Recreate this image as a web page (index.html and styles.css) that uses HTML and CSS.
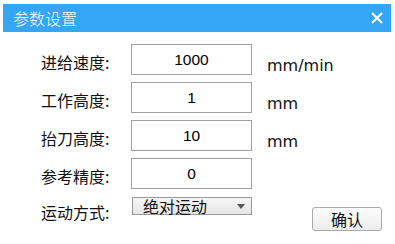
FILE: index.html
```html
<!DOCTYPE html>
<html lang="zh-CN">
  <head>
    <meta charset="UTF-8" />
    <meta name="viewport" content="width=device-width, initial-scale=1.0" />
    <title>参数设置</title>
    <link rel="stylesheet" href="styles.css">
  </head>
  <body>
    <div class="dialog">
      <div class="dialog-header">
        <span class="dialog-title">参数设置</span>
        <span class="close-btn">
          <svg width="12" height="12" viewBox="0 0 12 12">
            <path d="M1 1 L11 11 M11 1 L1 11" stroke="#fff" stroke-width="2.2" />
          </svg>
        </span>
      </div>

      <div class="param-form">
        <label class="param-label">进给速度:</label>
        <div class="param-input">1000</div>
        <span class="param-unit">mm/min</span>

        <label class="param-label">工作高度:</label>
        <div class="param-input">1</div>
        <span class="param-unit">mm</span>

        <label class="param-label">抬刀高度:</label>
        <div class="param-input">10</div>
        <span class="param-unit">mm</span>

        <label class="param-label">参考精度:</label>
        <div class="param-input">0</div>
        <span class="param-unit"></span>

        <label class="param-label mode-label">运动方式:</label>
        <div class="mode-select">
          <span>绝对运动</span>
          <span class="select-arrow"></span>
        </div>
        <div class="confirm-cell">
          <button class="confirm-btn">确认</button>
        </div>
      </div>
    </div>
  </body>
</html>
```

FILE: styles.css
```css
body {
  margin: 0;
  padding: 0;
  background: #fff;
  font-family: "Noto Sans CJK SC", "DejaVu Sans", sans-serif;
  color: #111;
}

.dialog {
  width: 395px;
  height: 244px;
  padding: 4px 4px 0 3px;
  box-sizing: border-box;
}

.dialog-header {
  height: 28px;
  background-color: #34a6f5;
  display: flex;
  align-items: center;
  justify-content: space-between;
  padding: 0 8px 0 10px;
}

.dialog-title {
  color: #fff;
  font-size: 16px;
  font-weight: 300;
  line-height: 28px;
}

.close-btn {
  display: flex;
  align-items: center;
  margin-top: -1px;
}

.param-form {
  display: grid;
  grid-template-columns: 90px 121px auto;
  grid-template-rows: 31px 31px 31px 31px auto;
  row-gap: 7px;
  margin: 12px 0 0 38px;
}

.param-label {
  font-size: 16px;
  line-height: 22px;
  align-self: center;
  padding-top: 5px;
}

.param-input {
  border: 1px solid #a0a0a0;
  box-sizing: border-box;
  height: 31px;
  text-align: center;
  font-family: "Liberation Sans", sans-serif;
  font-size: 15.5px;
  line-height: 29px;
  color: #000;
}

.param-unit {
  font-family: "DejaVu Sans", sans-serif;
  font-size: 16px;
  line-height: 20px;
  padding: 12px 0 0 15px;
}

.mode-label {
  margin-top: 1px;
  align-self: start;
  padding-top: 4px;
}

.mode-select {
  margin-left: 1px;
  margin-top: 1px;
  height: 18px;
  border: 1px solid #999;
  box-sizing: border-box;
  background: linear-gradient(#f6f6f6, #e6e6e6);
  display: flex;
  align-items: center;
  justify-content: space-between;
  padding: 0 6px 0 10px;
  font-size: 16px;
  line-height: 16px;
}

.select-arrow {
  width: 0;
  height: 0;
  border-left: 4px solid transparent;
  border-right: 4px solid transparent;
  border-top: 5px solid #555;
}

.confirm-cell {
  padding: 11px 0 0 60px;
}

.confirm-btn {
  width: 70px;
  height: 24px;
  border: 1px solid #aaa;
  border-radius: 3px;
  background: linear-gradient(#fdfdfd, #ececec);
  font-family: "Noto Sans CJK SC", sans-serif;
  font-size: 16px;
  line-height: 20px;
  color: #111;
  padding: 0;
}
```
